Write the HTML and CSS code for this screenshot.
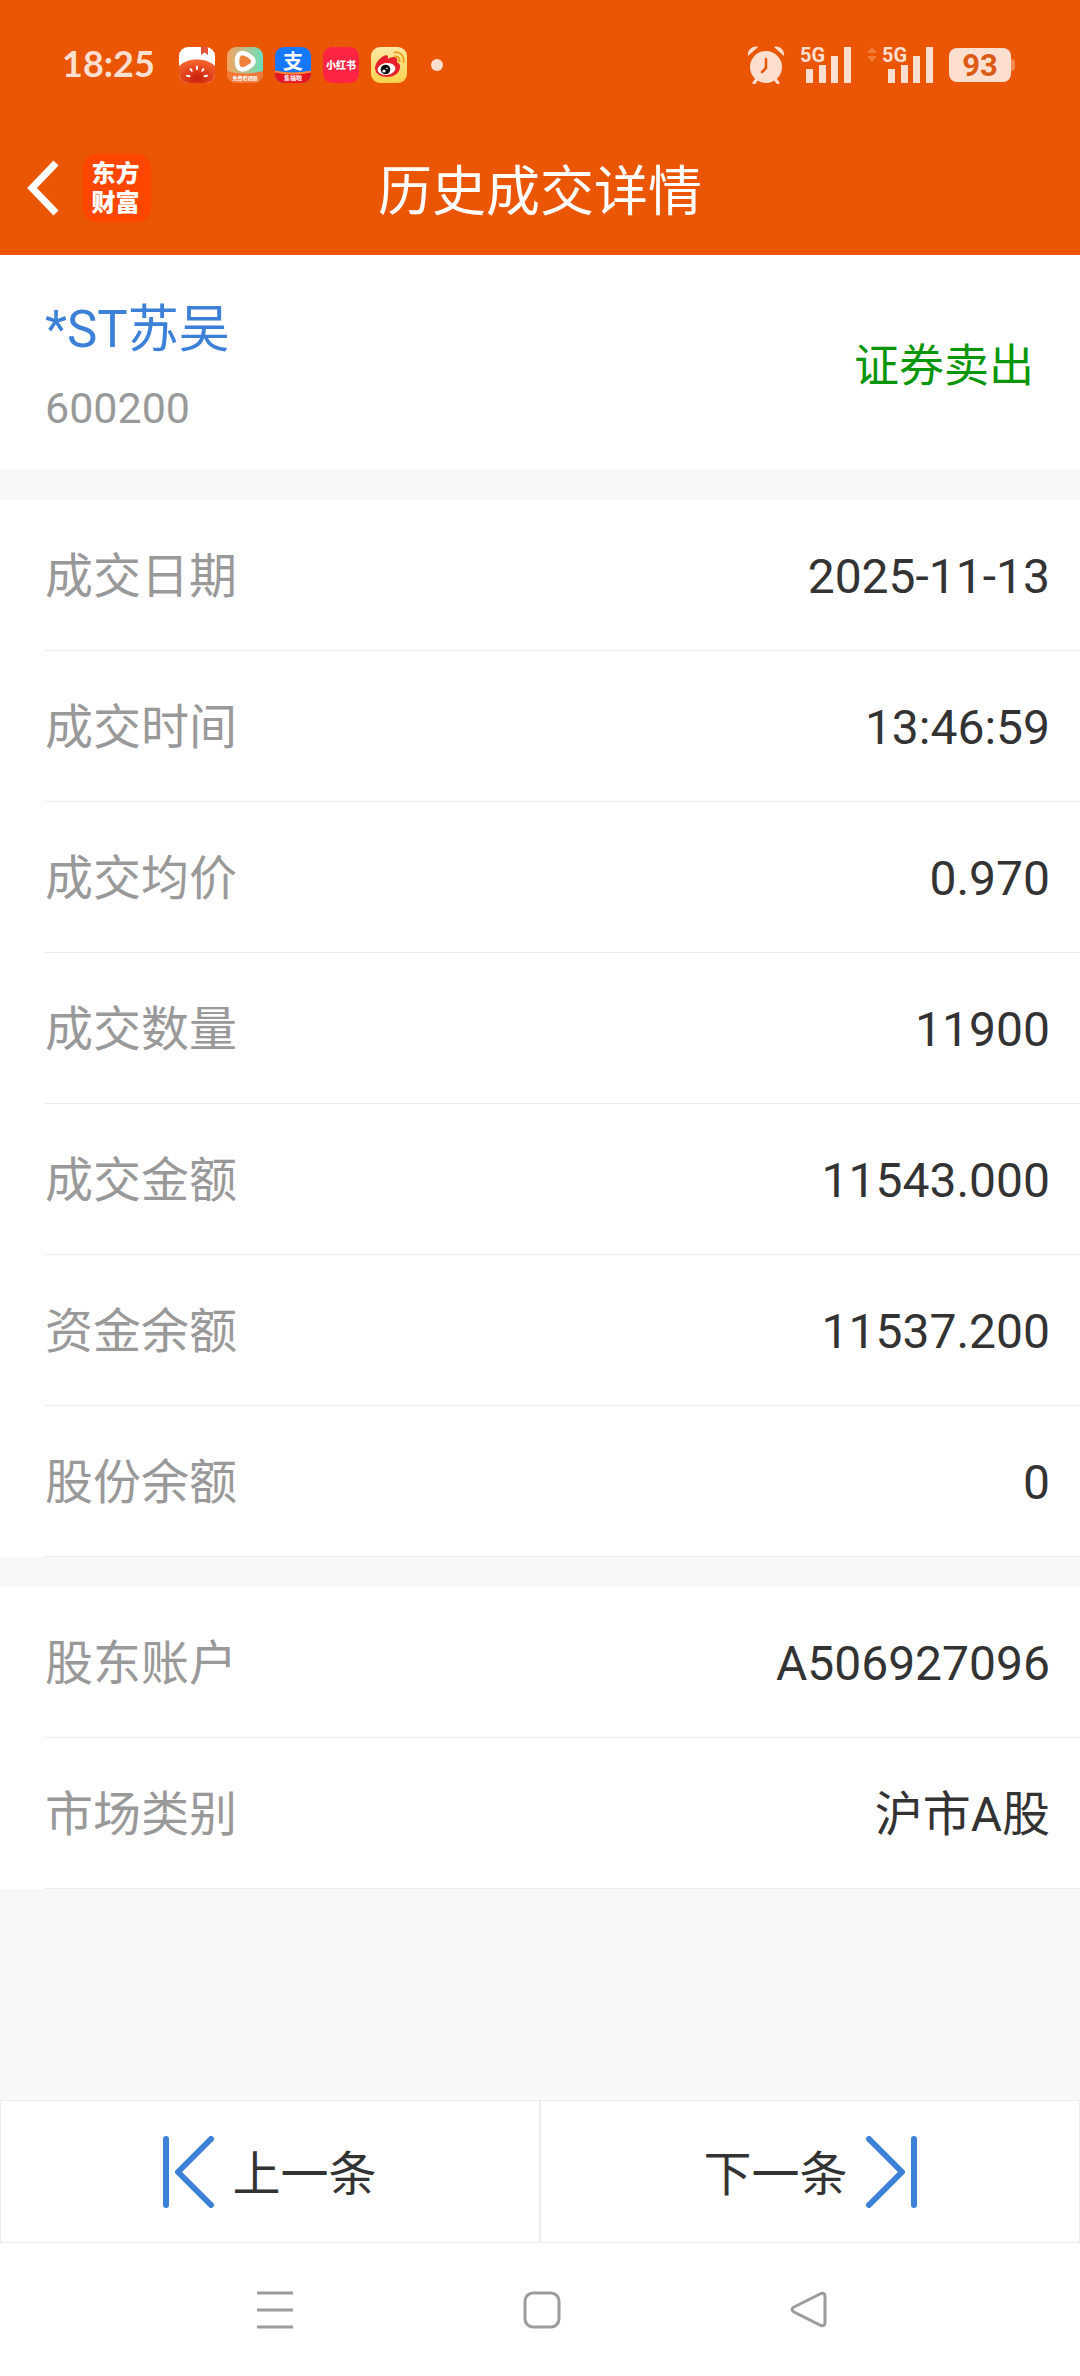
FILE: index.html
```
<!DOCTYPE html>
<html lang="zh-CN">
<head>
    <meta charset="UTF-8">
    <meta name="viewport" content="width=device-width, initial-scale=1.0">
    <title>历史成交详情</title>
    <link rel="stylesheet" href="styles.css">
</head>
<body>
    <header class="header">
        <div class="status-bar">
            <span class="time">18:25</span>
            <div class="app-icons">
                <svg class="app-icon" viewBox="0 0 36 36">
                    <defs>
                        <radialGradient id="tomato" cx="50%" cy="80%" r="70%">
                            <stop offset="0" stop-color="#c81e0c"/>
                            <stop offset="1" stop-color="#f4602a"/>
                        </radialGradient>
                    </defs>
                    <rect width="36" height="36" fill="#fff"/>
                    <path d="M22 0h7v8l-3.500-2.500L22 8z" fill="#e2553a"/>
                    <path d="M0 19C5 14.500 11 12.500 18 12.500S31 14.500 36 19v17H0z" fill="url(#tomato)"/>
                    <path d="M18 19.500v2.500M11.500 22l1.200 1.800M24.500 22l-1.200 1.800M8 28.800l2.500.500M28 28.800l-2.500.500" stroke="#fff" stroke-width="2" stroke-linecap="round"/>
                </svg>
                <svg class="app-icon" viewBox="0 0 36 36">
                    <defs>
                        <linearGradient id="video" x1="0" y1="0" x2="1" y2="0">
                            <stop offset="0" stop-color="#f2a35e"/>
                            <stop offset="0.500" stop-color="#b9c08e"/>
                            <stop offset="1" stop-color="#66e0bd"/>
                        </linearGradient>
                    </defs>
                    <rect width="36" height="36" fill="url(#video)"/>
                    <path d="M0 24q18 5 36 0v12H0z" fill="#f47838"/>
                    <path d="M12.500 7c2-1.800 5-1 8.500 1s5.500 4 5.500 6.500-2 4-5.500 6-6.500 2.500-8.500 1-2.500-4-2.500-7.500.500-5.500 2.500-7z" fill="#f0803c" stroke="#fff" stroke-width="4.500"/>
                    <text class="app-caption" x="18" y="33" text-anchor="middle">免费看短剧</text>
                </svg>
                <svg class="app-icon" viewBox="0 0 36 36">
                    <rect width="36" height="36" fill="#1677ff"/>
                    <path d="M0 24q18 4 36 0v12H0z" fill="#e8171f"/>
                    <path d="M0 23.500q18 4 36 0v2q-18 4-36 0z" fill="#ff8a3c"/>
                    <text class="alipay-mark" x="18" y="22" text-anchor="middle">支</text>
                    <text class="app-caption large" x="18" y="33" text-anchor="middle">集福啦</text>
                </svg>
                <svg class="app-icon" viewBox="0 0 36 36">
                    <rect width="36" height="36" fill="#ff2442"/>
                    <text class="red-mark" x="18" y="22" text-anchor="middle">小红书</text>
                </svg>
                <svg class="app-icon" viewBox="0 0 36 36">
                    <defs>
                        <linearGradient id="weibo" x1="0" y1="0" x2="0" y2="1">
                            <stop offset="0" stop-color="#fbe9a6"/>
                            <stop offset="1" stop-color="#ffd24a"/>
                        </linearGradient>
                    </defs>
                    <rect width="36" height="36" fill="url(#weibo)"/>
                    <path d="M4 21c0-5 6-11.500 10-12.500 3-.700 3.500 1.500 3 3.500 3-2 8-3 9 0 .500 1.500 0 2.500 0 3.500 3 1 3.500 3 3 5.500C28 27 22 30 16 30S4 27 4 21z" fill="#e6202c"/>
                    <ellipse cx="15.500" cy="22" rx="9" ry="6" transform="rotate(-8 15.500 22)" fill="#fff"/>
                    <circle cx="14.500" cy="22.500" r="4.800" fill="#111"/>
                    <circle cx="13" cy="24" r="1.600" fill="#fff"/>
                    <circle cx="16" cy="21.500" r=".8" fill="#fff"/>
                    <path d="M24 9.500c3-.500 5 2 4.500 5M23.500 5.500c6-1 10 3.500 9 9.500" fill="none" stroke="#f0a020" stroke-width="2" stroke-linecap="round"/>
                </svg>
            </div>
            <span class="dot"></span>

            <div class="system-icons">
                <svg class="alarm" width="38" height="38" viewBox="0 0 38 38">
                    <path d="M1 10C0 4 6-1 11 1zM37 10C38 4 32-1 27 1z" fill="currentColor"/>
                    <path d="M10 33l-3 4M28 33l3 4" stroke="currentColor" stroke-width="3" stroke-linecap="round"/>
                    <circle cx="19" cy="21" r="16" fill="currentColor"/>
                    <path d="M19 13v9l-4 4" fill="none" stroke="#ea5604" stroke-width="2.500" stroke-linecap="round" stroke-linejoin="round"/>
                </svg>
                <svg class="signal" width="52" height="38" viewBox="0 0 52 38">
                    <text x="0" y="16">5G</text>
                    <path d="M6 23h7v14H6zM19 19h7v18h-7zM31 10h7v27h-7zM44 1h7v36h-7z" fill="currentColor"/>
                </svg>
                <div class="sim">
                    <svg width="10" height="38" viewBox="0 0 10 38">
                        <path d="M0 7l5-6 5 6zM0 10h10l-5 6z" fill="#f47a3c"/>
                    </svg>
                    <svg class="signal" width="52" height="38" viewBox="0 0 52 38">
                        <text x="0" y="16">5G</text>
                        <path d="M6 23h7v14H6zM19 19h7v18h-7zM31 10h7v27h-7zM44 1h7v36h-7z" fill="currentColor"/>
                    </svg>
                </div>
                <div class="battery">93</div>
            </div>
        </div>

        <div class="title-bar">
            <div class="title-left">
                <button class="btn-back" type="button" aria-label="返回">
                    <svg width="32" height="56" viewBox="0 0 32 56">
                        <path d="M29 3L5 28l24 25" fill="none" stroke="#fff" stroke-width="7"/>
                    </svg>
                </button>
                <div class="logo">东方<br>财富</div>
            </div>
            <h1>历史成交详情</h1>
        </div>
    </header>

    <main>
        <section class="stock">
            <div>
                <a class="stock-name" href="#">*ST苏吴</a>
                <p class="stock-code">600200</p>
            </div>
            <span class="trade-type">证券卖出</span>
        </section>

        <dl class="details">
            <div class="row"><dt>成交日期</dt><dd>2025-11-13</dd></div>
            <div class="row"><dt>成交时间</dt><dd>13:46:59</dd></div>
            <div class="row"><dt>成交均价</dt><dd>0.970</dd></div>
            <div class="row"><dt>成交数量</dt><dd>11900</dd></div>
            <div class="row"><dt>成交金额</dt><dd>11543.000</dd></div>
            <div class="row"><dt>资金余额</dt><dd>11537.200</dd></div>
            <div class="row"><dt>股份余额</dt><dd>0</dd></div>
        </dl>

        <dl class="details">
            <div class="row"><dt>股东账户</dt><dd>A506927096</dd></div>
            <div class="row"><dt>市场类别</dt><dd>沪市A股</dd></div>
        </dl>
    </main>

    <div class="pager">
        <button class="btn-page" type="button">
            <svg width="51" height="72" viewBox="0 0 51 72">
                <path d="M3 3v66M48 3L15 36l33 33"/>
            </svg>
            <span>上一条</span>
        </button>
        <button class="btn-page" type="button">
            <span>下一条</span>
            <svg width="51" height="72" viewBox="0 0 51 72">
                <path d="M48 3v66M3 3l33 33L3 69"/>
            </svg>
        </button>
    </div>

    <nav class="system-nav">
        <button type="button" aria-label="菜单">
            <svg width="38" height="38" viewBox="0 0 38 38">
                <path d="M1 2h36M1 19h36M1 36h36"/>
            </svg>
        </button>
        <button type="button" aria-label="主页">
            <svg width="38" height="38" viewBox="0 0 38 38">
                <rect x="2" y="2" width="34" height="34" rx="8"/>
            </svg>
        </button>
        <button type="button" aria-label="返回上一级">
            <svg width="38" height="38" viewBox="0 0 38 38">
                <path d="M31 2.500L4 16q-4 2.500 0 5l27 13.500q4 1 4-3v-26q0-4-4-3z"/>
            </svg>
        </button>
    </nav>
</body>
</html>
```
FILE: styles.css
```
* {
    margin: 0;
    padding: 0;
    box-sizing: border-box;
}

body {
    min-height: 100vh;
    display: flex;
    flex-direction: column;
    background: #f7f8fa;
    color: #333;
    font-family: Roboto, "Noto Sans CJK SC", sans-serif;
    font-size: 48px;
    line-height: 60px;
}

button {
    border: none;
    background: none;
    font: inherit;
    color: inherit;
    cursor: pointer;
}

svg {
    display: block;
}

/* header */
.header {
    background: #ea5604;
    color: #fff;
}

.status-bar {
    height: 120px;
    padding: 10px 69px 0 62px;
    display: flex;
    align-items: center;
    color: #fddfd0;
}

.time {
    width: 117px;
    padding-bottom: 4px;
    font-family: Lato, sans-serif;
    font-size: 36px;
    font-weight: 700;
}

.app-icons {
    display: flex;
    gap: 12px;
}

.app-icon {
    width: 36px;
    height: 36px;
    border-radius: 9px;
}

.app-icon text {
    fill: #fff;
    font-family: "Noto Sans CJK SC", sans-serif;
    font-weight: 700;
}

.app-icon .app-caption {
    font-size: 5px;
}

.app-icon .large {
    font-size: 6px;
}

.app-icon .alipay-mark {
    font-size: 20px;
}

.app-icon .red-mark {
    font-size: 10px;
    font-weight: 900;
}

.dot {
    width: 12px;
    height: 12px;
    margin-left: 24px;
    border-radius: 50%;
    background: #fddfd0;
}

.system-icons {
    margin-left: auto;
    display: flex;
    align-items: center;
    gap: 15px;
}

.sim {
    display: flex;
    gap: 5px;
}

.signal {
    overflow: visible;
}

.signal text {
    fill: currentColor;
    font-size: 20px;
    font-weight: 700;
}

.battery {
    position: relative;
    width: 62px;
    height: 34px;
    border-radius: 8px;
    background: #fddfd0;
    color: #dc5a14;
    font-size: 31px;
    font-weight: 700;
    line-height: 36px;
    text-align: center;
}

.battery::after {
    content: "";
    position: absolute;
    top: 11px;
    right: -4px;
    width: 4px;
    height: 12px;
    border-radius: 0 4px 4px 0;
    background: #f28a54;
}

.title-bar {
    height: 135px;
    padding: 0 27px;
    display: grid;
    grid-template-columns: 1fr auto 1fr;
    align-items: center;
}

.title-left {
    display: flex;
    align-items: center;
    gap: 24px;
}

.logo {
    width: 68px;
    height: 68px;
    padding-top: 3px;
    padding-right: 3px;
    border-radius: 14px;
    background: #ff4600;
    font-family: "Noto Sans CJK SC", sans-serif;
    font-size: 24px;
    font-weight: 900;
    line-height: 29px;
    text-align: center;
}

h1 {
    padding-top: 10px;
    font-size: 54px;
    font-weight: 400;
}

/* stock summary */
main {
    flex: 1;
}

.stock {
    padding: 35px 46px 22px 45px;
    display: flex;
    justify-content: space-between;
    align-items: center;
    background: #fff;
}

.stock-name {
    display: block;
    color: #3c80d8;
    font-size: 51px;
    line-height: 79px;
    text-decoration: none;
}

.stock-code {
    color: #999;
    font-size: 43px;
    line-height: 79px;
}

.trade-type {
    padding-bottom: 5px;
    color: #0a960a;
    font-size: 45px;
}

/* trade details */
.details {
    margin-top: 30px;
    padding-left: 45px;
    background: #fff;
}

.row {
    height: 151px;
    padding: 4px 30px 0 0;
    display: flex;
    justify-content: space-between;
    align-items: center;
    border-bottom: 1px solid #ebecee;
}

.row dt {
    color: #999;
}

/* previous / next */
.pager {
    display: flex;
    background: #fff;
}

.btn-page {
    flex: 1;
    height: 143px;
    display: flex;
    justify-content: center;
    align-items: center;
    gap: 18px;
    border: 1px solid #ebecee;
}

.btn-page span {
    padding-top: 6px;
}

.btn-page path {
    fill: none;
    stroke: #3c80d8;
    stroke-width: 6;
    stroke-linecap: round;
    stroke-linejoin: round;
}

.system-nav {
    height: 133px;
    padding: 0 138px 0 142px;
    display: flex;
    background: #fff;
}

.system-nav button {
    flex: 1;
    display: flex;
    justify-content: center;
    align-items: center;
}

.system-nav svg {
    fill: none;
    stroke: #9c9c9c;
    stroke-width: 3;
}
```
